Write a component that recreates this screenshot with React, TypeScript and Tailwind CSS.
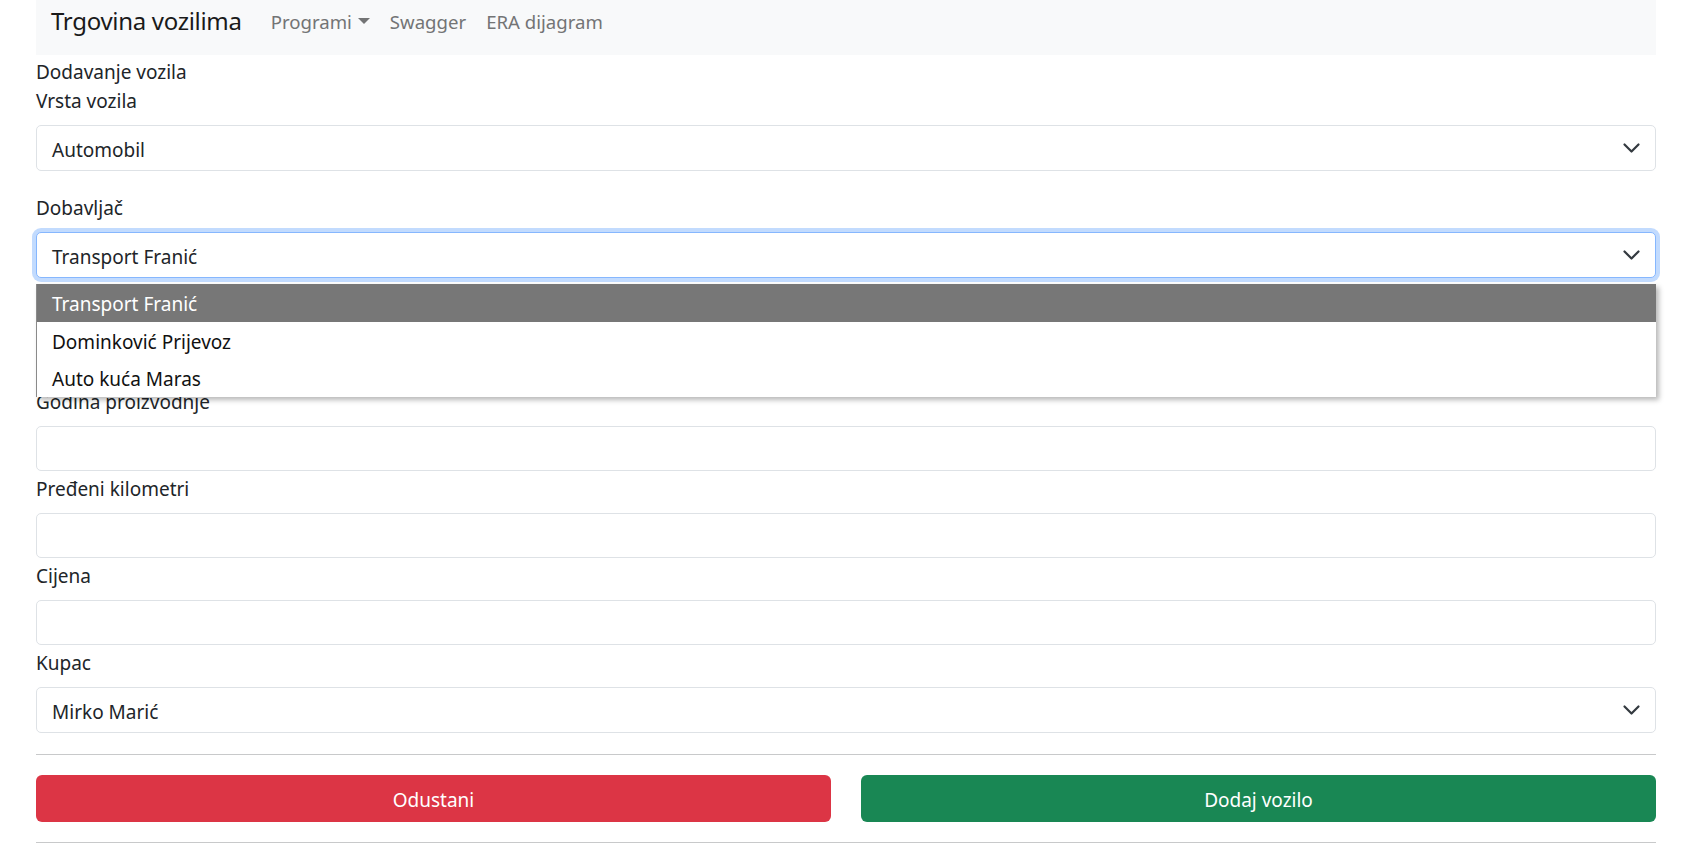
import React from "react";

function Chevron() {
  return (
    <svg
      width="19"
      height="14"
      viewBox="0 0 16 12"
      className="absolute right-[14px] top-1/2 -translate-y-1/2"
      fill="none"
    >
      <path
        d="m2 3 6 6 6-6"
        stroke="#343a40"
        strokeWidth="1.9"
        strokeLinecap="round"
        strokeLinejoin="round"
      />
    </svg>
  );
}

function SelectBox({ value, focused }: { value: string; focused?: boolean }) {
  return (
    <div
      className={
        focused
          ? "relative h-[46px] rounded-[5px] border border-[#86b7fe] bg-white pl-[15px] pt-[4px] flex items-center shadow-[0_0_0_4px_rgba(13,110,253,0.25)]"
          : "relative h-[46px] rounded-[5px] border border-[#dee2e6] bg-white pl-[15px] pt-[4px] flex items-center"
      }
    >
      <span className="text-[19px] leading-[29px]">{value}</span>
      <Chevron />
    </div>
  );
}

function InputBox() {
  return <div className="h-[45px] rounded-[5px] border border-[#dee2e6] bg-white" />;
}

function Label({ children, className }: { children: React.ReactNode; className?: string }) {
  return (
    <div className={"text-[19px] leading-[29px] pt-[1px] mb-[9px] " + (className ?? "")}>{children}</div>
  );
}

export default function App() {
  return (
    <div className="min-h-screen bg-white text-[#212529] font-['Noto_Sans',sans-serif]">
      <div className="px-[36px]">
        <nav className="h-[55px] bg-[#f8f9fa] px-[15px]">
          <div className="flex items-center h-[36px] pt-[6px]">
            <span className="text-[24px] leading-[36px] text-[#1a1a1a] mr-[19px] tracking-[-0.3px]">
              Trgovina vozilima
            </span>
            <span className="px-[10px] text-[18.6px] leading-[29px] text-[#737475] flex items-center">
              Programi
              <span className="ml-[6px] inline-block w-0 h-0 border-l-[6px] border-r-[6px] border-t-[6px] border-l-transparent border-r-transparent border-t-[#737475]" />
            </span>
            <span className="px-[10px] text-[18.6px] leading-[29px] text-[#737475]">Swagger</span>
            <span className="px-[10px] text-[18.6px] leading-[29px] text-[#737475]">ERA dijagram</span>
          </div>
        </nav>

        <div className="pt-[2px]">
          <div className="text-[19px] leading-[29px] pt-[1px] -mb-[1px]">Dodavanje vozila</div>
          <Label>Vrsta vozila</Label>
          <SelectBox value="Automobil" />

          <Label className="mt-[22px]">Dobavljač</Label>
          <div className="relative">
            <SelectBox value="Transport Franić" focused />
            <div className="absolute left-0 right-0 top-[calc(100%+6px)] z-10 bg-white border-l border-[#8a8a8a] shadow-[3px_3px_5px_rgba(0,0,0,0.28)] text-[19px]">
              <div className="h-[38px] bg-[#777777] text-white pl-[15px] pt-[3px] flex items-center">
                Transport Franić
              </div>
              <div className="h-[37px] text-[#111] pl-[15px] pt-[3px] flex items-center">
                Dominković Prijevoz
              </div>
              <div className="h-[38px] text-[#111] pl-[15px] pt-[2px] flex items-center">
                Auto kuća Maras
              </div>
            </div>
          </div>

          <Label className="mt-[109px]">Godina proizvodnje</Label>
          <InputBox />
          <Label className="mt-[3px]">Pređeni kilometri</Label>
          <InputBox />
          <Label className="mt-[3px]">Cijena</Label>
          <InputBox />
          <Label className="mt-[3px]">Kupac</Label>
          <SelectBox value="Mirko Marić" />

          <div className="mt-[21px] border-t border-[#c8c9ca]" />
          <div className="grid grid-cols-2 gap-[30px] mt-[20px]">
            <button className="h-[47px] rounded-[6px] bg-[#dc3545] text-white text-[19px] pt-[3px]">Odustani</button>
            <button className="h-[47px] rounded-[6px] bg-[#198754] text-white text-[19px] pt-[3px]">Dodaj vozilo</button>
          </div>
          <div className="mt-[20px] border-t border-[#c8c9ca]" />
        </div>
      </div>
    </div>
  );
}
